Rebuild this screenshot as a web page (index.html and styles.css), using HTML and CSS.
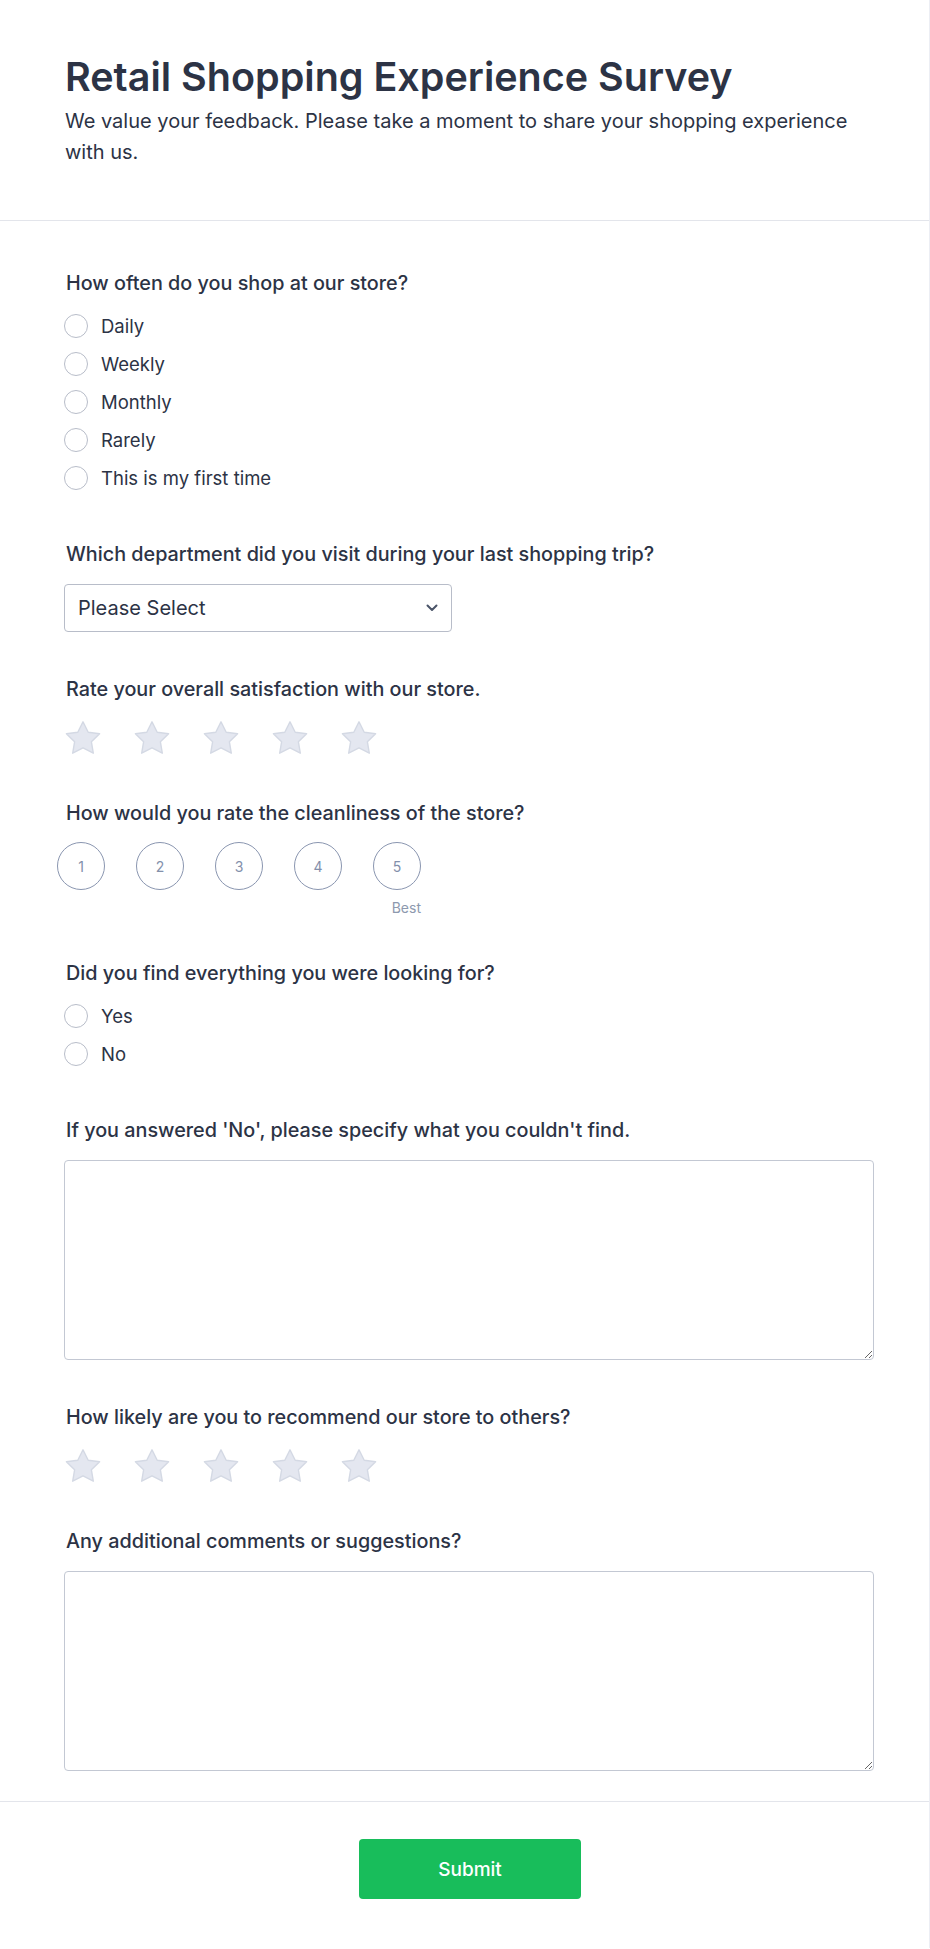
FILE: index.html
```html
<!DOCTYPE HTML>
<html>
<head>
<meta name="viewport" content="width=device-width, initial-scale=1">
<title>Retail Shopping Experience Survey</title>
<link rel="stylesheet" href="styles.css">
</head>
<body>
<div class="page">
<div class="head">
<h1>Retail Shopping Experience Survey</h1>
<p class="sub">We value your feedback. Please take a moment to share your shopping experience with us.</p>
</div>

<form class="form" onsubmit="return false">
<div class="q q-radio">
<div class="q-label">How often do you shop at our store?</div>
<label class="opt"><input type="radio" name="often"><span>Daily</span></label>
<label class="opt"><input type="radio" name="often"><span>Weekly</span></label>
<label class="opt"><input type="radio" name="often"><span>Monthly</span></label>
<label class="opt"><input type="radio" name="often"><span>Rarely</span></label>
<label class="opt"><input type="radio" name="often"><span>This is my first time</span></label>
</div>

<div class="q">
<div class="q-label">Which department did you visit during your last shopping trip?</div>
<div class="select-wrap">
<select class="select">
<option>Please Select</option>
<option>Clothing</option>
<option>Electronics</option>
<option>Home &amp; Garden</option>
<option>Grocery</option>
</select>
<svg class="chev" width="12" height="8" viewBox="0 0 12 8"><path d="M1.5 1.5 6 6l4.5-4.5" fill="none" stroke="#4a5468" stroke-width="2" stroke-linecap="round" stroke-linejoin="round"/></svg>
</div>
</div>

<div class="q q-stars">
<div class="q-label">Rate your overall satisfaction with our store.</div>
<div class="stars">
<svg class="star" viewBox="0 0 38 36"><path d="M19 1.8 24.2 12.2 35.6 13.8 27.4 21.8 29.3 33.2 19 27.8 8.7 33.2 10.6 21.8 2.4 13.8 13.8 12.2Z"/></svg>
<svg class="star" viewBox="0 0 38 36"><path d="M19 1.8 24.2 12.2 35.6 13.8 27.4 21.8 29.3 33.2 19 27.8 8.7 33.2 10.6 21.8 2.4 13.8 13.8 12.2Z"/></svg>
<svg class="star" viewBox="0 0 38 36"><path d="M19 1.8 24.2 12.2 35.6 13.8 27.4 21.8 29.3 33.2 19 27.8 8.7 33.2 10.6 21.8 2.4 13.8 13.8 12.2Z"/></svg>
<svg class="star" viewBox="0 0 38 36"><path d="M19 1.8 24.2 12.2 35.6 13.8 27.4 21.8 29.3 33.2 19 27.8 8.7 33.2 10.6 21.8 2.4 13.8 13.8 12.2Z"/></svg>
<svg class="star" viewBox="0 0 38 36"><path d="M19 1.8 24.2 12.2 35.6 13.8 27.4 21.8 29.3 33.2 19 27.8 8.7 33.2 10.6 21.8 2.4 13.8 13.8 12.2Z"/></svg>
</div>
</div>

<div class="q q-scale">
<div class="q-label">How would you rate the cleanliness of the store?</div>
<div class="scale">
<div class="scale-item"><span class="circle">1</span></div>
<div class="scale-item"><span class="circle">2</span></div>
<div class="scale-item"><span class="circle">3</span></div>
<div class="scale-item"><span class="circle">4</span></div>
<div class="scale-item"><span class="circle">5</span><span class="scale-note">Best</span></div>
</div>
</div>

<div class="q q-radio">
<div class="q-label">Did you find everything you were looking for?</div>
<label class="opt"><input type="radio" name="found"><span>Yes</span></label>
<label class="opt"><input type="radio" name="found"><span>No</span></label>
</div>

<div class="q">
<div class="q-label">If you answered 'No', please specify what you couldn't find.</div>
<textarea class="area"></textarea>
</div>

<div class="q q-stars">
<div class="q-label">How likely are you to recommend our store to others?</div>
<div class="stars">
<svg class="star" viewBox="0 0 38 36"><path d="M19 1.8 24.2 12.2 35.6 13.8 27.4 21.8 29.3 33.2 19 27.8 8.7 33.2 10.6 21.8 2.4 13.8 13.8 12.2Z"/></svg>
<svg class="star" viewBox="0 0 38 36"><path d="M19 1.8 24.2 12.2 35.6 13.8 27.4 21.8 29.3 33.2 19 27.8 8.7 33.2 10.6 21.8 2.4 13.8 13.8 12.2Z"/></svg>
<svg class="star" viewBox="0 0 38 36"><path d="M19 1.8 24.2 12.2 35.6 13.8 27.4 21.8 29.3 33.2 19 27.8 8.7 33.2 10.6 21.8 2.4 13.8 13.8 12.2Z"/></svg>
<svg class="star" viewBox="0 0 38 36"><path d="M19 1.8 24.2 12.2 35.6 13.8 27.4 21.8 29.3 33.2 19 27.8 8.7 33.2 10.6 21.8 2.4 13.8 13.8 12.2Z"/></svg>
<svg class="star" viewBox="0 0 38 36"><path d="M19 1.8 24.2 12.2 35.6 13.8 27.4 21.8 29.3 33.2 19 27.8 8.7 33.2 10.6 21.8 2.4 13.8 13.8 12.2Z"/></svg>
</div>
</div>

<div class="q">
<div class="q-label">Any additional comments or suggestions?</div>
<textarea class="area"></textarea>
</div>
</form>

<div class="foot">
<button class="submit" type="button">Submit</button>
</div>
</div>
</body>
</html>
```

FILE: styles.css
```css
body {
  margin: 0;
  background: #fff;
  color: #2c3345;
  font-family: Inter, "Noto Sans", sans-serif;
}
.page {
  border-right: 1px solid #eceef4;
}
.head {
  padding: 54px 55px 52px 65px;
  border-bottom: 1px solid #e3e5eb;
}
.head h1 {
  margin: 0;
  font-size: 39.5px;
  line-height: 47px;
  font-weight: 600;
}
.sub {
  margin: 5px 0 0;
  font-size: 20px;
  line-height: 31px;
}
.form {
  display: flex;
  flex-direction: column;
  gap: 44px;
  padding: 49px 55px 30px 64px;
  border-bottom: 1px solid #e3e5eb;
}
.q-label {
  font-size: 19.8px;
  line-height: 27px;
  font-weight: 500;
  padding-left: 2px;
  margin-bottom: 16px;
}
.q-radio .q-label {
  margin-bottom: 10px;
}
.q-stars .q-label {
  margin-bottom: 17px;
}
.q-scale .q-label {
  margin-bottom: 15px;
}
.opt {
  display: flex;
  align-items: center;
  gap: 13px;
  height: 38px;
  font-size: 18.5px;
}
.opt input {
  appearance: none;
  margin: 0;
  width: 24px;
  height: 24px;
  border: 1px solid #b8bdc9;
  border-radius: 50%;
  background: #fff;
}
.opt input:checked {
  border: 7px solid #2e69ff;
}
.select-wrap {
  position: relative;
  width: 388px;
}
.select {
  appearance: none;
  width: 100%;
  height: 48px;
  padding: 0 40px 0 13px;
  border: 1px solid #b8bdc9;
  border-radius: 4px;
  background: #fff;
  color: #2c3345;
  font-family: inherit;
  font-size: 20px;
}
.chev {
  position: absolute;
  right: 14px;
  top: 20px;
  pointer-events: none;
}
.stars {
  display: flex;
  gap: 31px;
}
.star {
  width: 38px;
  height: 36px;
  fill: #e4e7f0;
  stroke: #d4d9e4;
  stroke-width: 1.4;
  stroke-linejoin: round;
}
.scale {
  display: flex;
  gap: 31px;
  margin-left: -7px;
}
.scale-item {
  display: flex;
  flex-direction: column;
  align-items: flex-end;
}
.circle {
  display: flex;
  align-items: center;
  justify-content: center;
  box-sizing: border-box;
  width: 48px;
  height: 48px;
  border: 1px solid #8a96b0;
  border-radius: 50%;
  color: #8390ab;
  font-size: 14px;
}
.scale-note {
  margin-top: 9px;
  font-size: 14px;
  line-height: 17px;
  color: #8d99ae;
}
.area {
  display: block;
  width: 810px;
  height: 200px;
  box-sizing: border-box;
  border: 1px solid #c3c8d3;
  border-radius: 4px;
  resize: vertical;
  font-family: inherit;
  font-size: 16px;
}
.foot {
  display: flex;
  justify-content: center;
  padding: 37px 0 49px 11px;
}
.submit {
  width: 222px;
  height: 60px;
  border: 0;
  border-radius: 4px;
  background: #18bd5b;
  color: #fff;
  font-family: inherit;
  font-size: 19px;
  font-weight: 500;
}
```
